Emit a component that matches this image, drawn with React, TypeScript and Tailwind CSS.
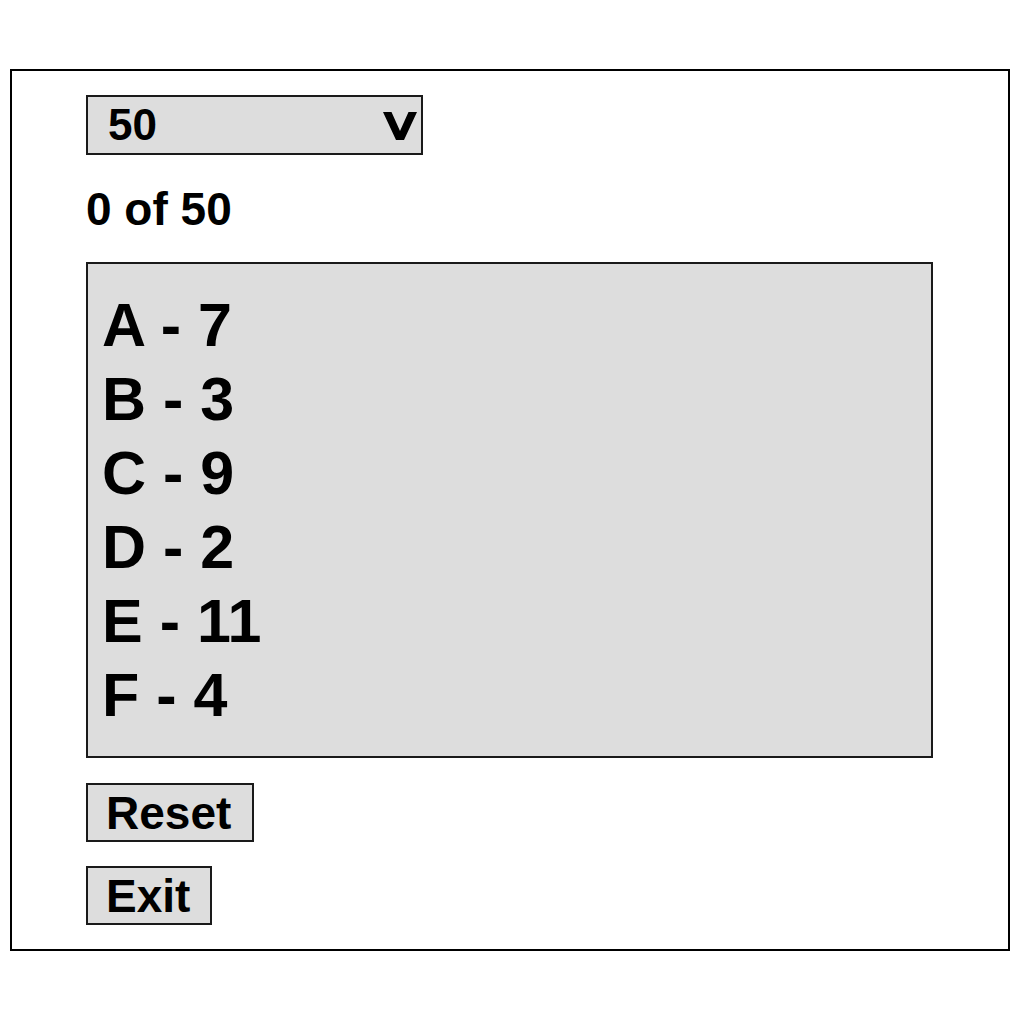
import React, { useState } from "react";

const items = [
  { label: "A", count: 7 },
  { label: "B", count: 3 },
  { label: "C", count: 9 },
  { label: "D", count: 2 },
  { label: "E", count: 11 },
  { label: "F", count: 4 },
];

const App: React.FC = () => {
  const [total] = useState<number>(50);
  const [picked, setPicked] = useState<number>(0);

  return (
    <div className="min-h-[1020px] bg-white pt-[69px] px-[10px] font-['Liberation_Sans',Arial,sans-serif] font-bold text-black">
      <div className="w-[1000px] h-[882px] border-2 border-black pl-[74px] pt-[24px] flex flex-col items-start">
        {/* dropdown */}
        <div className="w-[337px] h-[60px] border-2 border-[#1a1a1a] bg-[#dddddd] flex items-center justify-between pl-[20px] pr-[4px]">
          <span className="text-[44px] leading-none">{total}</span>
          <svg width="34" height="28" viewBox="0 0 34 28" className="mt-[2px]">
            <polygon points="0,0 8.5,0 17,19 25.5,0 34,0 21,28 13,28" fill="#000" />
          </svg>
        </div>

        <div className="mt-[31px] text-[46px] leading-[46px]">
          {picked} of {total}
        </div>

        {/* list */}
        <div className="mt-[30px] w-[847px] h-[496px] border-2 border-[#1a1a1a] bg-[#dddddd] pl-[14px] pt-[24px]">
          {items.map((it) => (
            <div key={it.label} className="text-[61px] leading-[74px]">
              {it.label} - {it.count}
            </div>
          ))}
        </div>

        <button
          onClick={() => setPicked(0)}
          className="mt-[25px] h-[59px] border-2 border-[#1a1a1a] bg-[#dddddd] pl-[18px] pr-[21px] text-[46px] leading-none"
        >
          Reset
        </button>
        <button className="mt-[24px] h-[59px] border-2 border-[#1a1a1a] bg-[#dddddd] pl-[18px] pr-[20px] text-[46px] leading-none">
          Exit
        </button>
      </div>
    </div>
  );
};

export default App;
